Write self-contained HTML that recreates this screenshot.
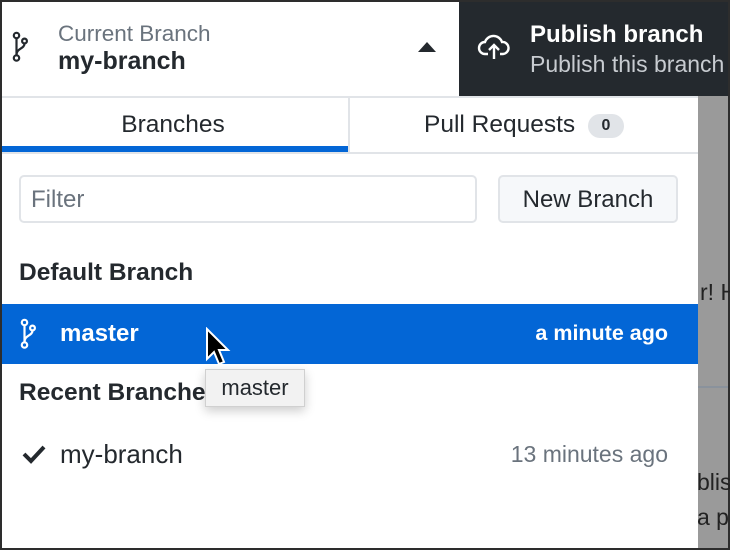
<!DOCTYPE html><html><head><style>
*{margin:0;padding:0;box-sizing:border-box}
body{width:730px;height:550px;background:#2d2d2d;position:relative;overflow:hidden;font-family:"Liberation Sans",sans-serif;color:#24292e}
.a{position:absolute;white-space:nowrap}
</style></head><body>
<div class="a" style="left:2px;top:2px;width:457px;height:94px;background:#fff"></div>
<div class="a" style="left:459px;top:2px;width:269px;height:94px;background:#24292e"></div>
<div class="a" style="left:698px;top:96px;width:30px;height:452px;background:#9a9a9a"></div>
<div class="a" style="left:698px;top:386px;width:30px;height:2px;background:#8a929c"></div>
<div class="a" style="left:700px;top:279px;font-size:23px;color:#222">r! H</div>
<div class="a" style="left:697px;top:469px;font-size:23px;color:#222">blis</div>
<div class="a" style="left:697px;top:504px;font-size:23px;color:#222">a p</div>
<svg class="a" style="left:12px;top:31px" width="16" height="32" viewBox="0 0 16 32"><g fill="none" stroke="#24292e" stroke-width="2.2"><circle cx="4.5" cy="4.5" r="2.7"/><circle cx="4.5" cy="27" r="2.7"/><circle cx="12.5" cy="10" r="2.4"/><path d="M4.5 7.2V24.3M12.5 12.5C12.5 18 4.5 17 4.5 24"/></g></svg>
<div class="a" style="left:58px;top:21px;font-size:22.5px;color:#6a737d">Current Branch</div>
<div class="a" style="left:58px;top:47px;font-size:25px;font-weight:bold">my-branch</div>
<div class="a" style="left:418px;top:42px;width:0;height:0;border-left:9px solid transparent;border-right:9px solid transparent;border-bottom:10px solid #24292e"></div>
<svg class="a" style="left:477px;top:33px" width="34" height="28" viewBox="0 0 34 28"><g fill="none" stroke="#fff" stroke-width="2.4"><path d="M11 21H8a6 6 0 0 1 0-12a9 9 0 0 1 17 0a6 6 0 0 1 1 12h-3"/><path d="M17 26V13M12 17l5-5 5 5"/></g></svg>
<div class="a" style="left:530px;top:21px;font-size:24px;font-weight:bold;color:#fff">Publish branch</div>
<div class="a" style="left:530px;top:51px;font-size:23px;color:#c8ccd1">Publish this branch</div>
<div class="a" style="left:2px;top:96px;width:696px;height:452px;background:#fff"></div>
<div class="a" style="left:2px;top:96px;width:696px;height:2px;background:#e1e4e8"></div>
<div class="a" style="left:348px;top:98px;width:2px;height:54px;background:#e1e4e8"></div>
<div class="a" style="left:2px;top:152px;width:696px;height:2px;background:#e1e4e8"></div>
<div class="a" style="left:2px;top:146px;width:346px;height:6px;background:#0366d6"></div>
<div class="a" style="left:0px;top:111px;width:346px;text-align:center;font-size:24.5px">Branches</div>
<div class="a" style="left:424px;top:111px;font-size:24.5px">Pull Requests</div>
<div class="a" style="left:588px;top:114px;width:36px;height:24px;border-radius:12px;background:#e1e4e8;font-size:16px;font-weight:bold;text-align:center;line-height:24px">0</div>
<div class="a" style="left:19px;top:175px;width:458px;height:48px;border:2px solid #e1e4e8;border-radius:5px;font-size:24px;color:#6a737d;padding:9px 0 0 10px">Filter</div>
<div class="a" style="left:498px;top:175px;width:180px;height:48px;border:2px solid #e1e4e8;border-radius:5px;background:#f6f8fa;font-size:24px;text-align:center;padding-top:9px">New Branch</div>
<div class="a" style="left:19px;top:259px;font-size:24.5px;font-weight:bold">Default Branch</div>
<div class="a" style="left:2px;top:304px;width:696px;height:60px;background:#0366d6"></div>
<svg class="a" style="left:20px;top:318px" width="16" height="32" viewBox="0 0 16 32"><g fill="none" stroke="#fff" stroke-width="2.2"><circle cx="4.5" cy="4.5" r="2.7"/><circle cx="4.5" cy="27" r="2.7"/><circle cx="12.5" cy="10" r="2.4"/><path d="M4.5 7.2V24.3M12.5 12.5C12.5 18 4.5 17 4.5 24"/></g></svg>
<div class="a" style="left:60px;top:320px;font-size:24px;font-weight:bold;color:#fff">master</div>
<div class="a" style="left:400px;top:321px;width:268px;text-align:right;font-size:21.5px;font-weight:bold;color:#fff">a minute ago</div>
<div class="a" style="left:19px;top:379px;font-size:24.5px;font-weight:bold">Recent Branches</div>
<div class="a" style="left:205px;top:369px;width:100px;height:38px;background:#f2f2f2;border:1px solid #d0d0d0;box-shadow:0 4px 10px rgba(0,0,0,.2);font-size:22px;text-align:center;padding-top:5px">master</div>
<svg class="a" style="left:205px;top:327px" width="26" height="40" viewBox="0 0 26 40"><path d="M2 2V32L9 25L14 37L19 35L14 23H23Z" fill="#000" stroke="#fff" stroke-width="2"/></svg>
<svg class="a" style="left:21px;top:443px" width="26" height="22" viewBox="0 0 26 22"><path d="M3 11l7 7L23 4" fill="none" stroke="#24292e" stroke-width="4"/></svg>
<div class="a" style="left:60px;top:439px;font-size:26px">my-branch</div>
<div class="a" style="left:400px;top:441px;width:268px;text-align:right;font-size:23px;color:#6a737d">13 minutes ago</div>
</body></html>
